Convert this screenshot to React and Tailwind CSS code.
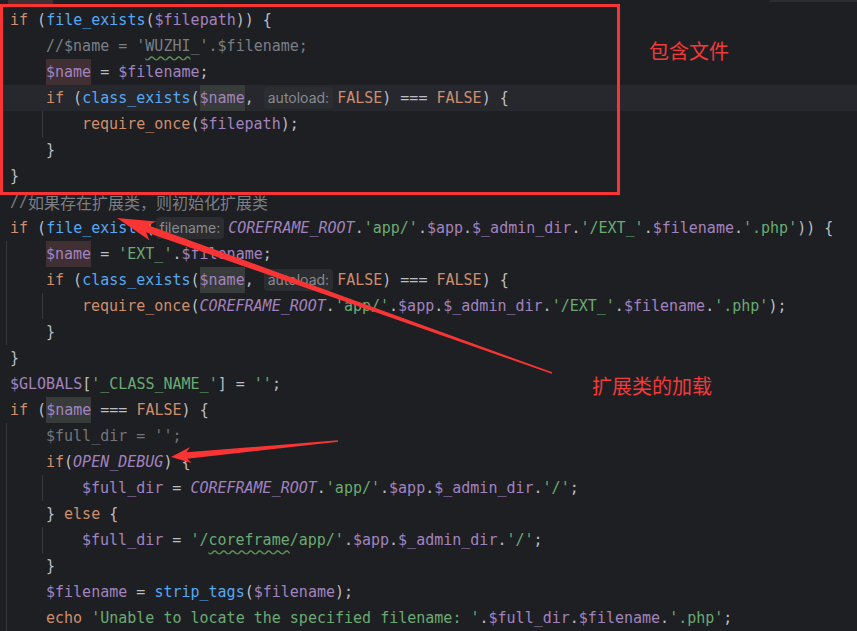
import React from "react";

const K = "text-[#cf8e6d]";
const F = "text-[#56a8f5]";
const V = "text-[#a283bf]";
const S = "text-[#6aab73]";
const CM = "text-[#7a7e85]";
const CN = "text-[#a283bf] italic";
const VW = "text-[#a283bf] bg-[#402f33]";
const VR = "text-[#a283bf] bg-[#373b39]";
const GR = "text-[#72757b]";
const WAVY = "underline decoration-wavy decoration-[#5e8f52] underline-offset-[4px]";

// [text, className] or ["hint", label]
const lines = [
  { g: [], t: [["box", "w-[45px] -ml-[2px] bg-[#402f33]"]] },
  { g: [], t: [["if", K], [" ("], ["file_exists", F], ["("], ["$filepath", V], [")) {"]] },
  { g: [false], t: [["//$name = '", CM], ["WUZHI", CM + " " + WAVY], ["_'.$filename;", CM]] },
  { g: [false], t: [["$name", VW], [" = "], ["$filename", V], [";"]] },
  { g: [false], hl: true, t: [["if", K], [" ("], ["class_exists", F], ["("], ["$name", VR], [", "], ["hint", "autoload:"], ["FALSE", K], [") === "], ["FALSE", K], [") {"]] },
  { g: [false, true], t: [["require_once", K], ["("], ["$filepath", V], [");"]] },
  { g: [false], t: [["}"]] },
  { g: [], t: [["}"]] },
  { g: [], t: [["//", CM], ["cjk", "如果存在扩展类，则初始化扩展类"]] },
  { g: [], t: [["if", K], [" ("], ["file_exists", F], ["("], ["hint", "filename:"], ["COREFRAME_ROOT", CN], ["."], ["'app/'", S], ["."], ["$app", V], ["."], ["$_admin_dir", V], ["."], ["'/EXT_'", S], ["."], ["$filename", V], ["."], ["'.php'", S], [")) {"]] },
  { g: [true], t: [["$name", VW], [" = "], ["'EXT_'", S], ["."], ["$filename", V], [";"]] },
  { g: [true], t: [["if", K], [" ("], ["class_exists", F], ["("], ["$name", VR], [", "], ["hint", "autoload:"], ["FALSE", K], [") === "], ["FALSE", K], [") {"]] },
  { g: [true, true], t: [["require_once", K], ["("], ["COREFRAME_ROOT", CN], ["."], ["'app/'", S], ["."], ["$app", V], ["."], ["$_admin_dir", V], ["."], ["'/EXT_'", S], ["."], ["$filename", V], ["."], ["'.php'", S], [");"]] },
  { g: [true], t: [["}"]] },
  { g: [], t: [["}"]] },
  { g: [], t: [["$GLOBALS", V], ["["], ["'_CLASS_NAME_'", S], ["] = "], ["''", S], [";"]] },
  { g: [], t: [["if", K], [" ("], ["$name", VR], [" === "], ["FALSE", K], [") {"]] },
  { g: [true], t: [["$full_dir = '';", GR]] },
  { g: [true], t: [["if", K], ["("], ["OPEN_DEBUG", CN], [") {"]] },
  { g: [true, true], t: [["$full_dir", V], [" = "], ["COREFRAME_ROOT", CN], ["."], ["'app/'", S], ["."], ["$app", V], ["."], ["$_admin_dir", V], ["."], ["'/'", S], [";"]] },
  { g: [true], t: [["} "], ["else", K], [" {"]] },
  { g: [true, true], t: [["$full_dir", V], [" = "], ["'/", S], ["coreframe", S + " " + WAVY], ["/app/'", S], ["."], ["$app", V], ["."], ["$_admin_dir", V], ["."], ["'/'", S], [";"]] },
  { g: [true], t: [["}"]] },
  { g: [true], t: [["$filename", V], [" = "], ["strip_tags", F], ["("], ["$filename", V], [");"]] },
  { g: [true], t: [["echo", K], [" "], ["'Unable to locate the specified filename: '", S], ["."], ["$full_dir", V], ["."], ["$filename", V], ["."], ["'.php'", S], [";"]] },
];

function Token({ tok }) {
  const [text, cls] = tok;
  if (text === "hint") {
    return (
      <span className="self-center ml-[1px] mr-[4px] h-[22px] px-[4px] rounded-[4px] bg-[#2b2d30] text-[#878a90] font-['Inter',sans-serif] text-[14px] leading-[22px] not-italic">
        {cls}
      </span>
    );
  }
  if (text === "cjk") {
    return <span className="text-[#7a7e85] text-[16px] font-['Noto_Sans_CJK_SC',sans-serif]">{cls}</span>;
  }
  if (text === "box") {
    return <span className={cls} />;
  }
  return <span className={cls || ""}>{text}</span>;
}

function Line({ line }) {
  return (
    <div className={`flex h-[26px] leading-[26px] whitespace-pre pl-[6px] ${line.hl ? "bg-[#26282e]" : ""}`}>
      {line.g.map((on, i) => (
        <span key={i} className={`w-[36px] shrink-0 ${on ? "border-l border-[#35383d]" : ""}`} />
      ))}
      <span className="w-[4px] shrink-0" />
      {line.t.map((tok, i) => (
        <Token key={i} tok={tok} />
      ))}
    </div>
  );
}

export default function App() {
  return (
    <div className="relative w-[857px] h-[631px] overflow-hidden bg-[#1e1f22] text-[#bcbec4] text-[15px] font-['DejaVu_Sans_Mono','Noto_Sans_CJK_SC',monospace]">
      {/* code */}
      <div className="mt-[-19px]">
        {lines.map((l, i) => (
          <Line key={i} line={l} />
        ))}
      </div>

      {/* popup edge top right */}
      <div className="absolute right-0 top-0 w-[87px] h-[2px] bg-[#2b2d30]" />

      {/* annotations */}
      <div className="absolute left-0 top-[4px] w-[620px] h-[191px] border-[3px] border-[#f83434]" />
      <div className="absolute left-[649px] top-[39px] text-[20px] leading-[24px] text-[#f23a3a] font-['Noto_Sans_CJK_SC',sans-serif]">
        包含文件
      </div>
      <div className="absolute left-[592px] top-[374px] text-[20px] leading-[24px] text-[#f23a3a] font-['Noto_Sans_CJK_SC',sans-serif]">
        扩展类的加载
      </div>
      <svg className="absolute left-0 top-0" width="857" height="631" viewBox="0 0 857 631">
        <polygon
          fill="#f83434"
          points="117,218 156.2,221.4 148.1,225.2 552.3,372.3 551.7,373.7 146.1,232.2 149.4,240.2"
        />
        <polygon
          fill="#f83434"
          points="171,457 190.1,447.1 186.6,452.3 337.9,440.3 338.1,441.7 187.2,458.7 191.7,463.1"
        />
      </svg>
    </div>
  );
}
